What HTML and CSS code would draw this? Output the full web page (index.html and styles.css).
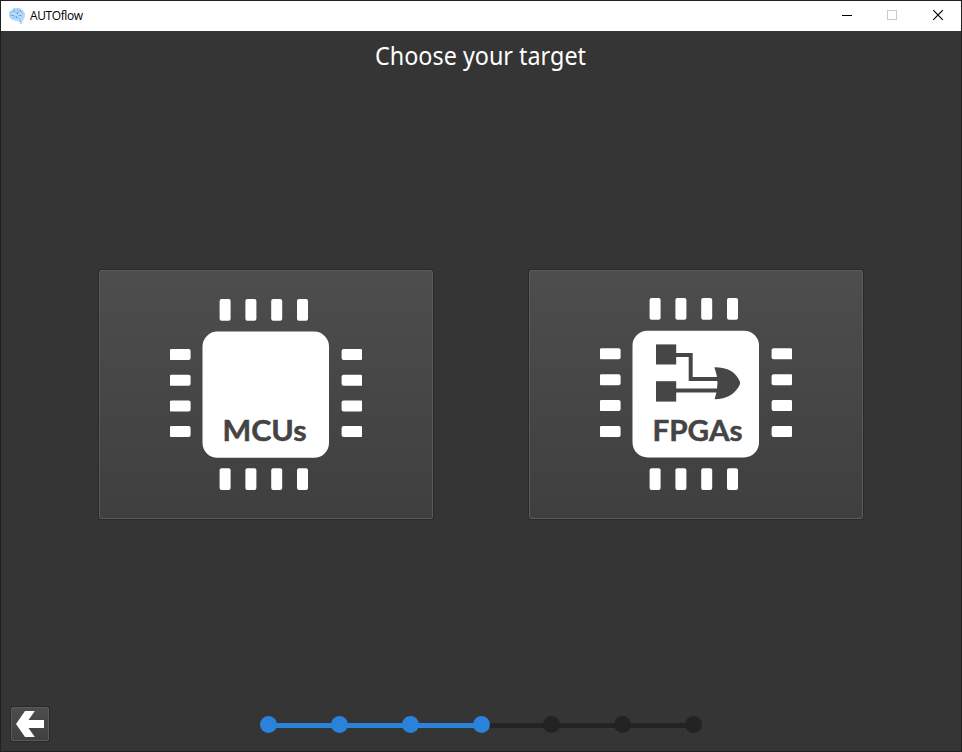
FILE: index.html
```html
<!DOCTYPE html>
<html lang="en">
<head>
<meta charset="utf-8">
<title>AUTOflow</title>
<link rel="stylesheet" href="styles.css">
</head>
<body>
<div class="window">
  <header class="titlebar">
    <svg class="logo" width="18" height="18" viewBox="0 0 18 18">
      <path d="M1 8Q0 4 4 3Q5 0 9 1Q13 0 14 3Q17 4 17 8Q17 12 15 13L14 17L12 17L11 14Q7 15 6 13Q2 14 1 8Z" fill="#b9dbf8"/>
      <g fill="none" stroke="#74b0e8" stroke-width="1" stroke-dasharray="2 1">
        <path d="M2 6L6 4L9 6L13 4L15 7M2 9L5 8L8 10L12 8L15 10M5 11L8 10L12 12L12 15M6 2L7 5M10 2L9 6"/>
      </g>
      <g fill="#4f91d2"><rect x="5" y="4" width="1" height="1"/><rect x="9" y="6" width="1" height="1"/><rect x="4" y="8" width="1" height="1"/><rect x="12" y="8" width="1" height="1"/><rect x="12" y="3" width="1" height="1"/><rect x="8" y="10" width="1" height="1"/></g>
    </svg>
    <span class="app-name">AUTOflow</span>
    <div class="controls">
      <svg width="46" height="30" viewBox="0 0 46 30" shape-rendering="crispEdges"><path d="M18 14.5h10" stroke="#000"/></svg>
      <svg width="46" height="30" viewBox="0 0 46 30" shape-rendering="crispEdges"><rect x="18.5" y="9.5" width="9" height="9" fill="none" stroke="#ccc"/></svg>
      <svg width="46" height="30" viewBox="0 0 46 30"><path d="M18.2 9.2l9.6 9.6M27.8 9.2l-9.6 9.6" stroke="#000" stroke-width="1.2"/></svg>
    </div>
  </header>
  <main class="content">
    <h1><svg width="260" height="40" viewBox="0 0 260 40"><text class="heading" x="24" y="28" textLength="211" lengthAdjust="spacingAndGlyphs">Choose your target</text></svg></h1>
    <div class="targets">
      <button class="target" aria-label="MCUs">
        <svg width="192" height="192" viewBox="170 298 192 192">
          <g fill="#fff">
            <rect x="202.5" y="331.5" width="126.5" height="126.3" rx="15"/>
            <rect x="219.6" y="299" width="11" height="21.7" rx="2"/><rect x="245.4" y="299" width="11" height="21.7" rx="2"/><rect x="271.2" y="299" width="11" height="21.7" rx="2"/><rect x="297" y="299" width="11" height="21.7" rx="2"/>
            <rect x="219.6" y="468.3" width="11" height="21.7" rx="2"/><rect x="245.4" y="468.3" width="11" height="21.7" rx="2"/><rect x="271.2" y="468.3" width="11" height="21.7" rx="2"/><rect x="297" y="468.3" width="11" height="21.7" rx="2"/>
            <rect x="169.5" y="349" width="21.1" height="11" rx="2"/><rect x="169.5" y="374.8" width="21.1" height="11" rx="2"/><rect x="169.5" y="400.4" width="21.1" height="11" rx="2"/><rect x="169.5" y="426.1" width="21.1" height="11" rx="2"/>
            <rect x="341.6" y="349" width="21" height="11" rx="2"/><rect x="341.6" y="374.8" width="21" height="11" rx="2"/><rect x="341.6" y="400.4" width="21" height="11" rx="2"/><rect x="341.6" y="426.1" width="21" height="11" rx="2"/>
          </g>
          <text class="chip-label" x="222.5" y="441" textLength="84" lengthAdjust="spacingAndGlyphs">MCUs</text>
        </svg>
      </button>
      <button class="target" aria-label="FPGAs">
        <svg width="192" height="192" viewBox="600 298 192 192">
          <g fill="#fff">
            <rect x="632.5" y="330.7" width="126.5" height="126.8" rx="15"/>
            <rect x="649.6" y="298" width="11" height="21.7" rx="2"/><rect x="675.4" y="298" width="11" height="21.7" rx="2"/><rect x="701.2" y="298" width="11" height="21.7" rx="2"/><rect x="727" y="298" width="11" height="21.7" rx="2"/>
            <rect x="649.6" y="468.3" width="11" height="21.7" rx="2"/><rect x="675.4" y="468.3" width="11" height="21.7" rx="2"/><rect x="701.2" y="468.3" width="11" height="21.7" rx="2"/><rect x="727" y="468.3" width="11" height="21.7" rx="2"/>
            <rect x="599.5" y="348.3" width="21.1" height="11" rx="2"/><rect x="599.5" y="374.2" width="21.1" height="11" rx="2"/><rect x="599.5" y="400" width="21.1" height="11" rx="2"/><rect x="599.5" y="426" width="21.1" height="11" rx="2"/>
            <rect x="771.6" y="348.3" width="21" height="11" rx="2"/><rect x="771.6" y="374.2" width="21" height="11" rx="2"/><rect x="771.6" y="400" width="21" height="11" rx="2"/><rect x="771.6" y="426" width="21" height="11" rx="2"/>
          </g>
          <g fill="#464646">
            <rect x="656" y="344.4" width="20.2" height="20.1"/>
            <rect x="656" y="381.2" width="20.2" height="20.4"/>
            <path d="M714.4 367.2C727 367 736 372 739.6 381Q740.6 383 739.6 385C735 394 727 399 714.6 399.2Q720.5 383 714.4 367.2Z"/>
          </g>
          <path d="M676 355.1H690.7V379.1H718M676 390.5H718" fill="none" stroke="#464646" stroke-width="4"/>
          <text class="chip-label" x="652.5" y="441" textLength="90" lengthAdjust="spacingAndGlyphs">FPGAs</text>
        </svg>
      </button>
    </div>
    <footer class="nav">
      <button class="back" aria-label="Back">
        <svg width="28" height="26" viewBox="16 711 28 26"><path d="M16 724L25 711H34.8L28.5 720H44V728H28.5L34.8 737H25Z" fill="#fff"/></svg>
      </button>
      <div class="steps">
        <i class="dot done"></i><i class="bar done"></i><i class="dot done"></i><i class="bar done"></i><i class="dot done"></i><i class="bar done"></i><i class="dot done"></i><i class="bar"></i><i class="dot"></i><i class="bar"></i><i class="dot"></i><i class="bar"></i><i class="dot"></i>
      </div>
    </footer>
  </main>
</div>
</body>
</html>
```
FILE: styles.css
```css
* { box-sizing: border-box; }
body { margin: 0; }
.window {
  width: 962px;
  height: 752px;
  display: flex;
  flex-direction: column;
  border: 1px solid #1f201f;
  background: #353535;
}
.titlebar {
  height: 30px;
  flex: none;
  display: flex;
  align-items: center;
  padding-left: 7px;
  background: #fff;
}
.logo { margin-top: -1px; }
.app-name {
  margin: -1px 0 0 4px;
  font: 12px "Open Sans", "Noto Sans", sans-serif;
  letter-spacing: -0.4px;
  color: #000;
}
.controls { display: flex; margin-left: auto; }
.controls svg:first-child { margin-right: -1px; }
.content {
  flex: 1;
  display: flex;
  flex-direction: column;
}
h1 {
  height: 40px;
  margin: 6px 0 0;
  display: flex;
  justify-content: center;
}
.heading {
  font: 26px "Noto Sans", sans-serif;
  fill: #fff;
}
.targets {
  display: flex;
  justify-content: center;
  gap: 96px;
  margin-top: 193px;
}
button {
  display: flex;
  justify-content: center;
  border: 1px solid #5b5b5b;
  border-radius: 2px;
  box-shadow: 0 0 0 1px #292929;
}
.target {
  width: 334px;
  height: 249px;
  padding: 27px 0 0;
  background: linear-gradient(#4d4d4d, #3f3f3f);
}
.chip-label {
  font: bold 29px Lato, sans-serif;
  fill: #444;
  stroke: #444;
  stroke-width: 0.5px;
}
.nav {
  display: flex;
  align-items: center;
  height: 34px;
  margin: auto 0 10px 10px;
}
.back {
  width: 38px;
  height: 34px;
  padding: 3px 0 0;
  background: linear-gradient(#4d4d4d, #404040);
}
.steps {
  display: flex;
  align-items: center;
  margin: 1px 0 0 211px;
}
.dot {
  position: relative;
  z-index: 1;
  width: 17px;
  height: 17px;
  flex: none;
  border-radius: 50%;
  background: #232323;
}
.bar {
  width: 57.85px;
  height: 5px;
  margin: 2px -2px 0;
  background: #232323;
}
.done { background: #2a82da; }
```
